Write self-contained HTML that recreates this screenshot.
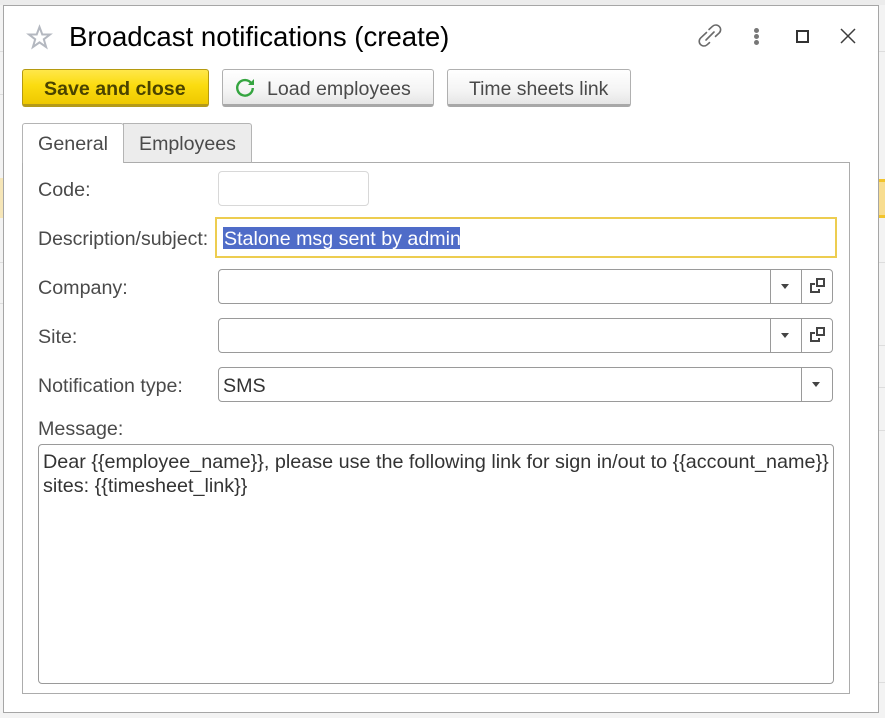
<!DOCTYPE html>
<html><head><meta charset="utf-8">
<style>
html,body{margin:0;padding:0}
body{width:885px;height:718px;position:relative;overflow:hidden;background:#f3f3f3;font-family:"Liberation Sans",Arial,sans-serif;color:#4a4a4a}
.a{position:absolute;box-sizing:border-box}
.t{position:absolute;white-space:nowrap;font-size:19.7px;line-height:24px;margin-top:1px}
.f{position:absolute;box-sizing:border-box;background:#fff;border:1px solid #9a9a9a;border-radius:4px}
.btn{position:absolute;box-sizing:border-box;height:38px;top:69px;border:1px solid #b0b0b0;border-bottom:3px solid #a8a8a8;border-radius:3px;background:linear-gradient(#fff,#f4f4f4 60%,#e6e6e6)}
.v{position:absolute;width:1px;background:#9a9a9a}
.tri{position:absolute;width:0;height:0;border-left:4px solid transparent;border-right:4px solid transparent;border-top:5px solid #444}
</style></head><body>
<div class="a" style="left:0;top:0;width:885px;height:5px;background:#ececec"></div>
<div class="a" style="left:0;top:51px;width:3px;height:1px;background:#ddd"></div>
<div class="a" style="left:879px;top:51px;width:6px;height:1px;background:#ddd"></div>
<div class="a" style="left:0;top:94px;width:3px;height:1px;background:#ddd"></div>
<div class="a" style="left:0;top:178px;width:3px;height:40px;background:#f6e6b8"></div>
<div class="a" style="left:879px;top:179px;width:6px;height:39px;background:#f8dd90;border-top:3px solid #f2c42c;border-bottom:3px solid #f2c42c"></div>
<div class="a" style="left:0;top:262px;width:3px;height:1px;background:#ddd"></div>
<div class="a" style="left:879px;top:262px;width:6px;height:1px;background:#ddd"></div>
<div class="a" style="left:0;top:303px;width:3px;height:1px;background:#ddd"></div>
<div class="a" style="left:879px;top:345px;width:6px;height:1px;background:#ddd"></div>
<div class="a" style="left:879px;top:387px;width:6px;height:1px;background:#ddd"></div>
<div class="a" style="left:879px;top:430px;width:6px;height:1px;background:#ddd"></div>
<div class="a" style="left:879px;top:682px;width:6px;height:1px;background:#ddd"></div>

<div class="a" style="left:3px;top:5px;width:876px;height:708px;background:#fff;border:1px solid #a6a6a6"></div>

<svg class="a" style="left:26px;top:24px" width="27" height="26" viewBox="0 0 27 26"><path d="M13.500 3l2.800 7.500h7.700l-6.200 4.800 2.300 7.700-6.600-4.600-6.600 4.600 2.300-7.700L3 10.500h7.700z" fill="none" stroke="#b4b8c0" stroke-width="2"/></svg>
<div class="t" style="left:69px;top:21px;margin-top:0;font-size:27.6px;line-height:32px;color:#000">Broadcast notifications (create)</div>

<svg class="a" style="left:696px;top:22px" width="28" height="28" viewBox="0 0 28 28" fill="none" stroke="#6a6a6a" stroke-width="1.6" stroke-linecap="round"><path d="M13 7.500l3.500-3.200c2-1.800 5-1.700 6.800.2 1.800 1.900 1.700 4.800-.2 6.600l-3.600 3.300"/><path d="M10.500 10.500l-5.700 5.300c-2 1.800-2.100 4.800-.3 6.700 1.800 1.900 4.700 2 6.700.2l2.300-2.100"/><path d="M10 18l8-8"/></svg>
<div class="a" style="left:754px;top:28px;width:5px;height:5px;border-radius:50%;background:#777"></div>
<div class="a" style="left:754px;top:34px;width:5px;height:5px;border-radius:50%;background:#777"></div>
<div class="a" style="left:754px;top:40px;width:5px;height:5px;border-radius:50%;background:#777"></div>
<div class="a" style="left:796px;top:30px;width:13px;height:13px;border:2px solid #333"></div>
<svg class="a" style="left:840px;top:28px" width="16" height="16" viewBox="0 0 16 16"><path d="M1 1l14 14M15 1L1 15" stroke="#3c3c3c" stroke-width="1.500" fill="none"/></svg>

<div class="a" style="left:22px;top:69px;width:187px;height:38px;border:1px solid #b59a10;border-bottom:3px solid #b49a18;border-radius:3px;background:linear-gradient(#ffe74a,#fbdc10 45%,#eec800)"></div>
<div class="t" style="left:44px;top:76px;font-weight:bold;color:#4a4300;font-size:19.6px">Save and close</div>

<div class="btn" style="left:222px;width:212px"></div>
<svg class="a" style="left:234px;top:76px" width="22" height="22" viewBox="0 0 22 22" fill="none"><path d="M17.500 7.500A7.800 7.800 0 1 0 18.800 12" stroke="#35a540" stroke-width="2.400"/><path d="M14 9h6V3z" fill="#35a540"/></svg>
<div class="t" style="left:267px;top:76px;font-size:19.6px">Load employees</div>

<div class="btn" style="left:447px;width:184px"></div>
<div class="t" style="left:469px;top:76px;font-size:19.4px">Time sheets link</div>

<div class="a" style="left:22px;top:162px;width:828px;height:532px;border:1px solid #acacac;background:#fff"></div>
<div class="a" style="left:123px;top:123px;width:129px;height:40px;background:#ececec;border:1px solid #b4b4b4;border-bottom:1px solid #acacac;border-radius:0 3px 0 0"></div>
<div class="a" style="left:22px;top:123px;width:102px;height:40px;background:#fff;border:1px solid #b4b4b4;border-bottom:none;border-radius:3px 3px 0 0"></div>
<div class="t" style="left:38px;top:131px">General</div>
<div class="t" style="left:139px;top:131px;font-size:19.6px">Employees</div>

<div class="t" style="left:38px;top:177px">Code:</div>
<div class="f" style="left:218px;top:171px;width:151px;height:35px;border-color:#d8d8d8"></div>

<div class="t" style="left:38px;top:226px;font-size:19.5px">Description/subject:</div>
<div class="a" style="left:215px;top:217px;width:622px;height:41px;border:2px solid #edcd50;background:#fff"></div>
<div class="a" style="left:223px;top:227px;width:237px;height:22px;background:#4f6cc8"></div>
<div class="t" style="left:224px;top:226px;color:#fff;font-size:19.65px">Stalone msg sent by admin</div>

<div class="t" style="left:38px;top:275px">Company:</div>
<div class="f" style="left:218px;top:269px;width:615px;height:35px"></div>
<div class="v" style="left:770px;top:270px;height:33px"></div>
<div class="v" style="left:801px;top:270px;height:33px"></div>
<div class="tri" style="left:781px;top:284px"></div>
<svg class="a" style="left:809px;top:277px" width="16" height="17" viewBox="0 0 16 17" fill="none" stroke="#444" stroke-width="2"><path d="M8 2h7v7H8z"/><path d="M6 7H2v8h8v-3"/></svg>

<div class="t" style="left:38px;top:324px">Site:</div>
<div class="f" style="left:218px;top:318px;width:615px;height:35px"></div>
<div class="v" style="left:770px;top:319px;height:33px"></div>
<div class="v" style="left:801px;top:319px;height:33px"></div>
<div class="tri" style="left:781px;top:333px"></div>
<svg class="a" style="left:809px;top:326px" width="16" height="17" viewBox="0 0 16 17" fill="none" stroke="#444" stroke-width="2"><path d="M8 2h7v7H8z"/><path d="M6 7H2v8h8v-3"/></svg>

<div class="t" style="left:38px;top:373px;font-size:19.6px">Notification type:</div>
<div class="f" style="left:218px;top:367px;width:615px;height:35px"></div>
<div class="t" style="left:223px;top:373px;color:#333">SMS</div>
<div class="v" style="left:801px;top:368px;height:33px"></div>
<div class="tri" style="left:812px;top:382px"></div>

<div class="t" style="left:38px;top:416px">Message:</div>
<div class="f" style="left:38px;top:444px;width:796px;height:240px"></div>
<div class="t" style="left:43px;top:449px;color:#333;font-size:19.78px">Dear {{employee_name}}, please use the following link for sign in/out to {{account_name}}</div>
<div class="t" style="left:43px;top:473px;color:#333;font-size:19.78px">sites: {{timesheet_link}}</div>
</body></html>
